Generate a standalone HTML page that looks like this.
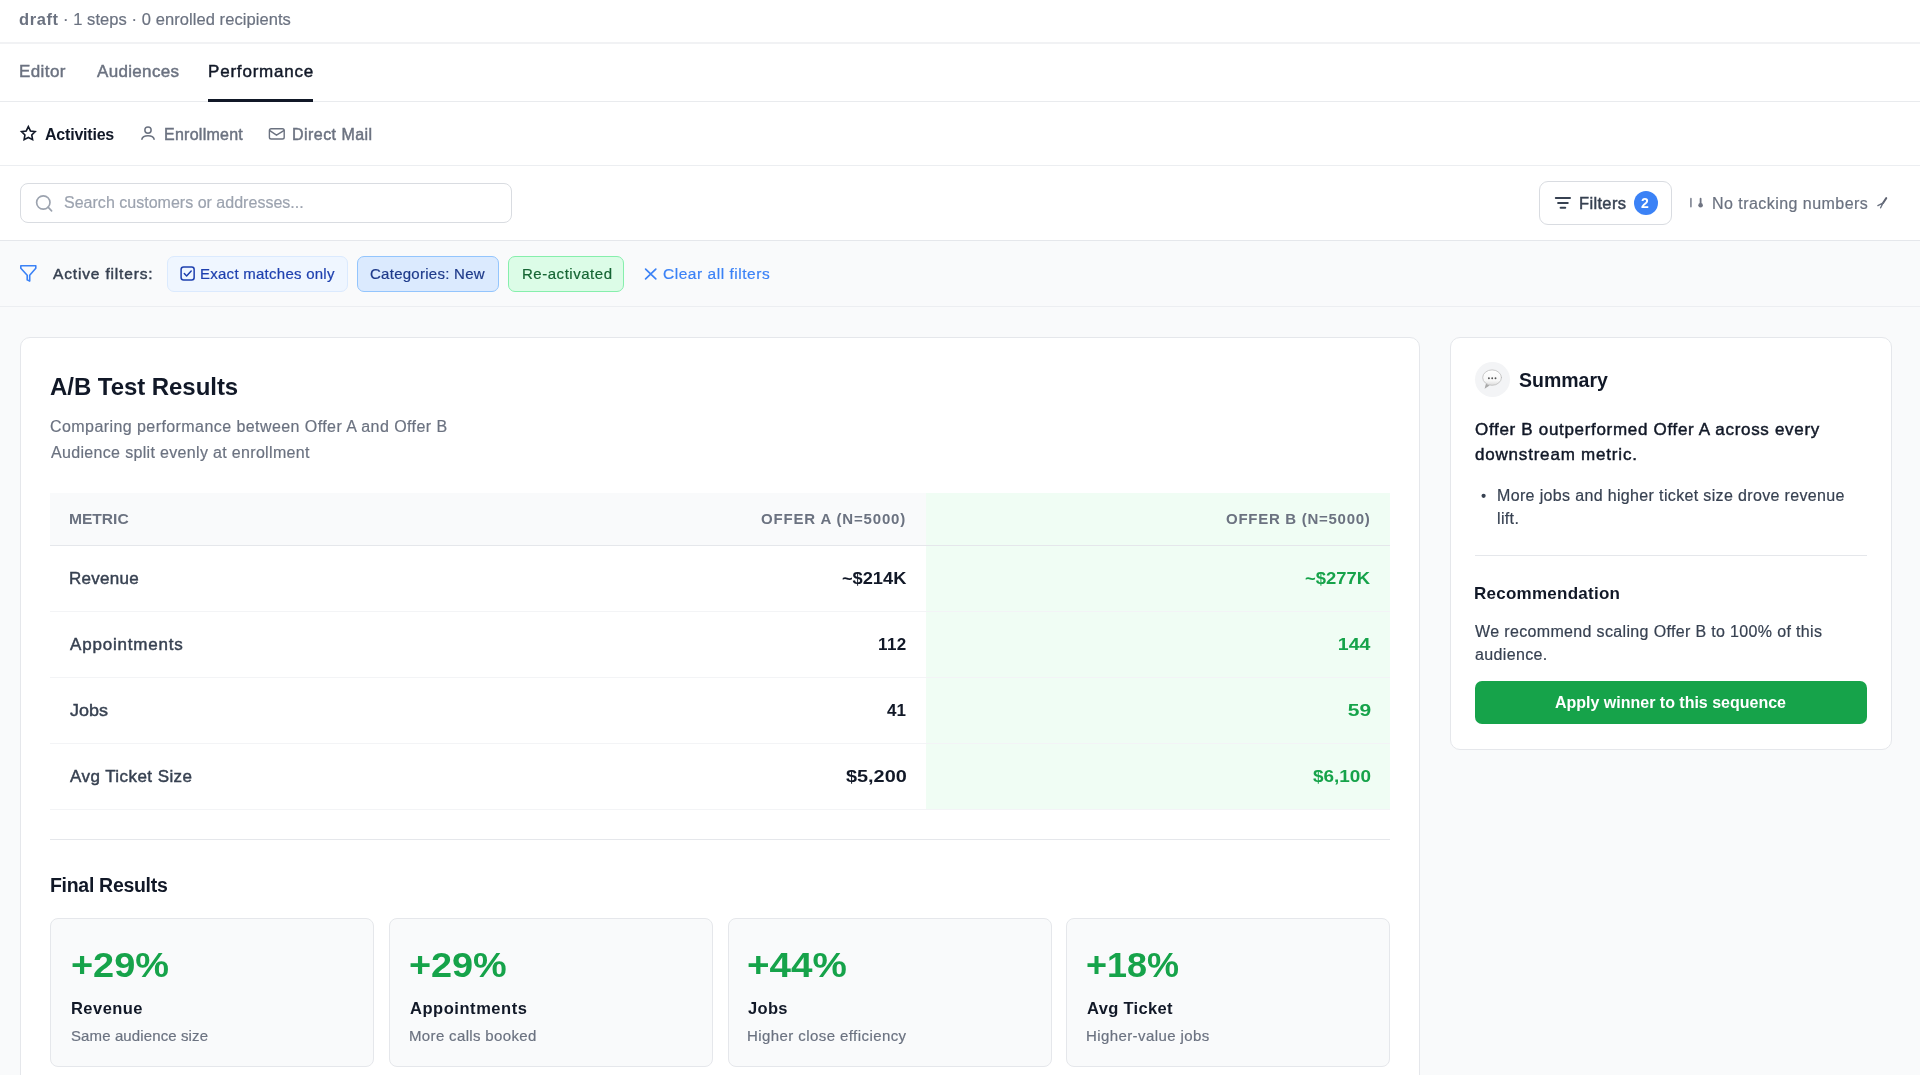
<!DOCTYPE html>
<html><head><meta charset="utf-8"><title>A/B Test Results</title>
<style>
html,body{margin:0;padding:0}
body{width:1920px;height:1075px;overflow:hidden;position:relative;background:#f9fafb;font-family:"Liberation Sans",sans-serif}
.a{position:absolute;box-sizing:border-box}
.t{position:absolute;white-space:nowrap;font-family:"Liberation Sans",sans-serif;will-change:transform}
</style></head><body>
<!-- header -->
<div class="a" style="left:0;top:0;width:1920px;height:241px;background:#fff"></div>
<div class="a" style="left:0;top:42px;width:1920px;height:2px;background:#f1f2f4"></div>
<div class="a" style="left:0;top:101px;width:1920px;height:1px;background:#e9ebee"></div>
<div class="a" style="left:208px;top:99px;width:105px;height:3px;background:#111827"></div>
<div class="a" style="left:0;top:165px;width:1920px;height:1px;background:#eceef1"></div>
<div class="a" style="left:20px;top:183px;width:492px;height:40px;border:1px solid #d9dce1;border-radius:8px;background:#fff"></div>
<div class="a" style="left:1539px;top:181px;width:133px;height:44px;border:1px solid #d9dce1;border-radius:9px;background:#fff"></div>
<div class="a" style="left:1633.5px;top:191px;width:24px;height:24px;border-radius:50%;background:#3b82f6"></div>
<div class="a" style="left:0;top:240px;width:1920px;height:1px;background:#e5e7eb"></div>
<!-- active filters bar -->
<div class="a" style="left:0;top:306px;width:1920px;height:1px;background:#eceef1"></div>
<div class="a" style="left:167px;top:256px;width:181px;height:36px;border:1px solid #dbeafe;border-radius:7px;background:#eff6ff"></div>
<div class="a" style="left:357px;top:256px;width:142px;height:36px;border:1px solid #93c5fd;border-radius:7px;background:#dbeafe"></div>
<div class="a" style="left:508px;top:256px;width:116px;height:36px;border:1px solid #86efac;border-radius:7px;background:#dcfce7"></div>
<!-- main card -->
<div class="a" style="left:20px;top:337px;width:1400px;height:800px;border:1px solid #e5e7eb;border-radius:10px;background:#fff"></div>
<div class="a" style="left:50px;top:493px;width:876px;height:52px;background:#f9fafb"></div>
<div class="a" style="left:926px;top:493px;width:464px;height:316px;background:#f0fdf4"></div>
<div class="a" style="left:50px;top:545px;width:1340px;height:1px;background:#e5e7eb"></div>
<div class="a" style="left:50px;top:611px;width:1340px;height:1px;background:#f3f4f6"></div>
<div class="a" style="left:50px;top:677px;width:1340px;height:1px;background:#f3f4f6"></div>
<div class="a" style="left:50px;top:743px;width:1340px;height:1px;background:#f3f4f6"></div>
<div class="a" style="left:50px;top:809px;width:1340px;height:1px;background:#f3f4f6"></div>
<div class="a" style="left:50px;top:839px;width:1340px;height:1px;background:#e5e7eb"></div>
<div class="a" style="left:50px;top:918px;width:324px;height:149px;border:1px solid #e5e7eb;border-radius:8px;background:#f9fafb"></div>
<div class="a" style="left:389px;top:918px;width:324px;height:149px;border:1px solid #e5e7eb;border-radius:8px;background:#f9fafb"></div>
<div class="a" style="left:727.5px;top:918px;width:324px;height:149px;border:1px solid #e5e7eb;border-radius:8px;background:#f9fafb"></div>
<div class="a" style="left:1066px;top:918px;width:324px;height:149px;border:1px solid #e5e7eb;border-radius:8px;background:#f9fafb"></div>
<!-- summary card -->
<div class="a" style="left:1450px;top:337px;width:442px;height:413px;border:1px solid #e5e7eb;border-radius:10px;background:#fff"></div>
<div class="a" style="left:1474.6px;top:361.9px;width:35px;height:35px;border-radius:50%;background:#f3f4f6"></div>
<div class="a" style="left:1475px;top:555px;width:392px;height:1px;background:#e5e7eb"></div>
<div class="a" style="left:1475px;top:681px;width:392px;height:43px;border-radius:7px;background:#16a34a"></div>
<svg class="a" style="left:0;top:0" width="1920" height="1075" viewBox="0 0 1920 1075" fill="none" stroke-linecap="round" stroke-linejoin="round">
<!-- star -->
<polygon points="28.35,126.64 30.47,130.93 35.20,131.62 31.77,134.95 32.58,139.66 28.35,137.44 24.12,139.66 24.93,134.95 21.50,131.62 26.23,130.93" stroke="#111827" stroke-width="1.6" stroke-linejoin="miter" stroke-miterlimit="10"/>
<!-- user -->
<circle cx="148" cy="130.05" r="3.15" stroke="#6b7280" stroke-width="1.5"/>
<path d="M141.85 139.25 C142.3 137 144.5 135.65 148 135.65 C151.5 135.65 153.7 137 154.15 139.25" stroke="#6b7280" stroke-width="1.5"/>
<!-- mail -->
<rect x="269.4" y="128.8" width="14.8" height="10.2" rx="1.8" stroke="#6b7280" stroke-width="1.4"/>
<path d="M269.8 130.6 L276.5 135.2 L283.8 130.6" stroke="#6b7280" stroke-width="1.4"/>
<!-- search -->
<circle cx="43.3" cy="202.5" r="6.68" stroke="#9ca3af" stroke-width="1.67"/>
<path d="M51.6 210.8 L48.05 207.2" stroke="#9ca3af" stroke-width="1.67"/>
<!-- filter lines -->
<path d="M1555.8 198 H1570 M1558.1 203 H1567.75 M1560.6 207.7 H1565.25" stroke="#374151" stroke-width="2"/>
<!-- tracking icons -->
<path d="M1690.9 198.7 V206.6" stroke="#8b909c" stroke-width="1.8"/>
<path d="M1700.6 198.7 V204" stroke="#6f7482" stroke-width="1.8"/>
<circle cx="1700.6" cy="205.3" r="2.3" fill="#6f7482"/>
<!-- pencil -->
<path d="M1886.2 198.2 L1883.2 202.8" stroke="#5f6472" stroke-width="2.1"/><path d="M1883.2 202.8 L1880.6 207.8 M1883.2 202.8 L1877.9 205.6" stroke="#6b7280" stroke-width="1.4"/>
<!-- funnel -->
<path d="M20.8 265.8 H35.8 V268.3 L29.7 275.2 V281.1 L27.2 279.9 V275.2 L20.8 268.3 Z" stroke="#3b82f6" stroke-width="1.6"/>
<!-- checkbox -->
<rect x="181.1" y="267.1" width="13.05" height="12.9" rx="2.5" stroke="#1e40af" stroke-width="1.5"/>
<path d="M184.3 273.5 L186.6 275.9 L191.2 271.1" stroke="#1e40af" stroke-width="1.5"/>
<!-- x -->
<path d="M645.6 269.2 L655.8 278.8 M655.8 269.2 L645.6 278.8" stroke="#3b82f6" stroke-width="1.7"/>
<!-- bullet -->
<circle cx="1483.6" cy="495.8" r="2.1" fill="#374151"/>
<!-- speech bubble emoji -->
<defs><linearGradient id="bg1" x1="0" y1="0" x2="0" y2="1"><stop offset="0" stop-color="#ffffff"/><stop offset="0.7" stop-color="#f7f7f7"/><stop offset="1" stop-color="#dcdcdc"/></linearGradient></defs>
<path d="M1486 383.6 L1484.6 388.8 L1489.6 385.4 Z" fill="#a9a9a9"/>
<ellipse cx="1492.1" cy="377.6" rx="9.4" ry="7.7" fill="url(#bg1)" stroke="#bdbdbd" stroke-width="0.8"/>
<circle cx="1488.9" cy="378.2" r="0.95" fill="#555"/>
<circle cx="1492.2" cy="378.2" r="0.95" fill="#555"/>
<circle cx="1495.5" cy="378.2" r="0.95" fill="#555"/>
</svg>

<div class="t" style="left:19px;top:9px;will-change:transform;font-size:16.5px;line-height:21px;white-space:nowrap;letter-spacing:0.575px;font-weight:700;color:#6b7280;">draft</div>
<div class="t" style="left:62.8px;top:9px;will-change:transform;font-size:16.5px;line-height:21px;white-space:nowrap;letter-spacing:0.069px;font-weight:400;-webkit-text-stroke:0.2px currentColor;color:#6b7280;">· 1 steps · 0 enrolled recipients</div>
<div class="t" style="left:19.3px;top:61px;will-change:transform;font-size:17.0px;line-height:21px;white-space:nowrap;letter-spacing:0.4px;font-weight:400;-webkit-text-stroke:0.45px currentColor;color:#6b7280;">Editor</div>
<div class="t" style="left:96.7px;top:61px;will-change:transform;font-size:17.0px;line-height:21px;white-space:nowrap;letter-spacing:0.325px;font-weight:400;-webkit-text-stroke:0.45px currentColor;color:#6b7280;">Audiences</div>
<div class="t" style="left:207.8px;top:61px;will-change:transform;font-size:17.0px;line-height:21px;white-space:nowrap;letter-spacing:0.8px;font-weight:400;-webkit-text-stroke:0.45px currentColor;color:#111827;">Performance</div>
<div class="t" style="left:44.9px;top:125px;will-change:transform;font-size:16.0px;line-height:20px;white-space:nowrap;letter-spacing:-0.211px;font-weight:700;color:#111827;">Activities</div>
<div class="t" style="left:163.5px;top:125px;will-change:transform;font-size:16.0px;line-height:20px;white-space:nowrap;letter-spacing:0.256px;font-weight:400;-webkit-text-stroke:0.45px currentColor;color:#6b7280;">Enrollment</div>
<div class="t" style="left:292.2px;top:125px;will-change:transform;font-size:16.0px;line-height:20px;white-space:nowrap;letter-spacing:0.45px;font-weight:400;-webkit-text-stroke:0.45px currentColor;color:#6b7280;">Direct Mail</div>
<div class="t" style="left:64.3px;top:193px;will-change:transform;font-size:16.0px;line-height:20px;white-space:nowrap;letter-spacing:0.016px;font-weight:400;-webkit-text-stroke:0.2px currentColor;color:#9ca3af;">Search customers or addresses...</div>
<div class="t" style="left:1578.75px;top:193px;will-change:transform;font-size:16.5px;line-height:21px;white-space:nowrap;letter-spacing:0.342px;font-weight:400;-webkit-text-stroke:0.45px currentColor;color:#374151;">Filters</div>
<div class="t" style="left:1641px;top:194px;will-change:transform;font-size:14.0px;line-height:18px;white-space:nowrap;letter-spacing:0px;font-weight:700;color:#ffffff;">2</div>
<div class="t" style="left:1711.75px;top:194px;will-change:transform;font-size:16px;line-height:20px;white-space:nowrap;letter-spacing:0.453px;font-weight:400;-webkit-text-stroke:0.2px currentColor;color:#6b7280;">No tracking numbers</div>
<div class="t" style="left:52.5px;top:264px;will-change:transform;font-size:15.5px;line-height:19px;white-space:nowrap;letter-spacing:0.839px;font-weight:400;-webkit-text-stroke:0.45px currentColor;color:#374151;">Active filters:</div>
<div class="t" style="left:199.6px;top:264px;will-change:transform;font-size:15.0px;line-height:19px;white-space:nowrap;letter-spacing:0.259px;font-weight:400;-webkit-text-stroke:0.2px currentColor;color:#1e40af;">Exact matches only</div>
<div class="t" style="left:370.25px;top:264px;will-change:transform;font-size:15.0px;line-height:19px;white-space:nowrap;letter-spacing:0.268px;font-weight:400;-webkit-text-stroke:0.2px currentColor;color:#1e3a8a;">Categories: New</div>
<div class="t" style="left:521.5px;top:264px;will-change:transform;font-size:15.0px;line-height:19px;white-space:nowrap;letter-spacing:0.527px;font-weight:400;-webkit-text-stroke:0.2px currentColor;color:#166534;">Re-activated</div>
<div class="t" style="left:662.7px;top:264px;will-change:transform;font-size:15.5px;line-height:19px;white-space:nowrap;letter-spacing:0.531px;font-weight:400;-webkit-text-stroke:0.2px currentColor;color:#3b82f6;">Clear all filters</div>
<div class="t" style="left:50px;top:372px;will-change:transform;font-size:24px;line-height:30px;white-space:nowrap;letter-spacing:-0.05px;font-weight:700;color:#111827;">A/B Test Results</div>
<div class="t" style="left:50px;top:417px;will-change:transform;font-size:16px;line-height:20px;white-space:nowrap;letter-spacing:0.429px;font-weight:400;-webkit-text-stroke:0.2px currentColor;color:#6b7280;">Comparing performance between Offer A and Offer B</div>
<div class="t" style="left:51px;top:443px;will-change:transform;font-size:16px;line-height:20px;white-space:nowrap;letter-spacing:0.329px;font-weight:400;-webkit-text-stroke:0.2px currentColor;color:#6b7280;">Audience split evenly at enrollment</div>
<div class="t" style="left:69.2px;top:510px;will-change:transform;font-size:14.5px;line-height:18px;white-space:nowrap;letter-spacing:0px;font-weight:700;color:#6b7280;transform:scaleX(1.0759);transform-origin:1px 0;">METRIC</div>
<div class="t" style="left:761.3px;top:509px;will-change:transform;font-size:15.0px;line-height:19px;white-space:nowrap;letter-spacing:0.827px;font-weight:700;color:#6b7280;">OFFER A (N=5000)</div>
<div class="t" style="left:1225.6px;top:509px;will-change:transform;font-size:15.0px;line-height:19px;white-space:nowrap;letter-spacing:0.72px;font-weight:700;color:#6b7280;">OFFER B (N=5000)</div>
<div class="t" style="left:69.3px;top:568px;will-change:transform;font-size:17.0px;line-height:21px;white-space:nowrap;letter-spacing:0.283px;font-weight:400;-webkit-text-stroke:0.45px currentColor;color:#374151;">Revenue</div>
<div class="t" style="left:841.7px;top:568px;will-change:transform;font-size:17.0px;line-height:21px;white-space:nowrap;letter-spacing:0px;font-weight:700;color:#111827;transform:scaleX(1.0729);transform-origin:1px 0;">~$214K</div>
<div class="t" style="left:1304.6px;top:568px;will-change:transform;font-size:17.0px;line-height:21px;white-space:nowrap;letter-spacing:0px;font-weight:700;color:#16a34a;transform:scaleX(1.0831);transform-origin:1px 0;">~$277K</div>
<div class="t" style="left:70.3px;top:634px;will-change:transform;font-size:17.0px;line-height:21px;white-space:nowrap;letter-spacing:0.809px;font-weight:400;-webkit-text-stroke:0.45px currentColor;color:#374151;">Appointments</div>
<div class="t" style="left:878.2px;top:634px;will-change:transform;font-size:17.0px;line-height:21px;white-space:nowrap;letter-spacing:0.4px;font-weight:700;color:#111827;">112</div>
<div class="t" style="left:1337.5px;top:634px;will-change:transform;font-size:17.0px;line-height:21px;white-space:nowrap;letter-spacing:0px;font-weight:700;color:#16a34a;transform:scaleX(1.1481);transform-origin:1px 0;">144</div>
<div class="t" style="left:70.3px;top:700px;will-change:transform;font-size:17.0px;line-height:21px;white-space:nowrap;letter-spacing:0px;font-weight:400;-webkit-text-stroke:0.45px currentColor;color:#374151;transform:scaleX(1.0556);transform-origin:0px 0;">Jobs</div>
<div class="t" style="left:886.9px;top:700px;will-change:transform;font-size:17.0px;line-height:21px;white-space:nowrap;letter-spacing:0.1px;font-weight:700;color:#111827;">41</div>
<div class="t" style="left:1347.5px;top:700px;will-change:transform;font-size:17.0px;line-height:21px;white-space:nowrap;letter-spacing:0px;font-weight:700;color:#16a34a;transform:scaleX(1.2353);transform-origin:1px 0;">59</div>
<div class="t" style="left:70.3px;top:766px;will-change:transform;font-size:17.0px;line-height:21px;white-space:nowrap;letter-spacing:0.436px;font-weight:400;-webkit-text-stroke:0.45px currentColor;color:#374151;">Avg Ticket Size</div>
<div class="t" style="left:846.4px;top:766px;will-change:transform;font-size:17.0px;line-height:21px;white-space:nowrap;letter-spacing:0px;font-weight:700;color:#111827;transform:scaleX(1.1686);transform-origin:0px 0;">$5,200</div>
<div class="t" style="left:1312.7px;top:766px;will-change:transform;font-size:17.0px;line-height:21px;white-space:nowrap;letter-spacing:0px;font-weight:700;color:#16a34a;transform:scaleX(1.1137);transform-origin:0px 0;">$6,100</div>
<div class="t" style="left:50px;top:873px;will-change:transform;font-size:19.5px;line-height:24px;white-space:nowrap;letter-spacing:-0.3px;font-weight:700;color:#111827;">Final Results</div>
<div class="t" style="left:70.5px;top:944px;will-change:transform;font-size:34.5px;line-height:43px;white-space:nowrap;letter-spacing:0px;font-weight:700;color:#16a34a;transform:scaleX(1.0989);transform-origin:1px 0;">+29%</div>
<div class="t" style="left:70.5px;top:998px;will-change:transform;font-size:16.5px;line-height:21px;white-space:nowrap;letter-spacing:0.458px;font-weight:700;color:#111827;">Revenue</div>
<div class="t" style="left:70.5px;top:1026px;will-change:transform;font-size:15.0px;line-height:19px;white-space:nowrap;letter-spacing:0.112px;font-weight:400;-webkit-text-stroke:0.2px currentColor;color:#6b7280;">Same audience size</div>
<div class="t" style="left:409px;top:944px;will-change:transform;font-size:34.5px;line-height:43px;white-space:nowrap;letter-spacing:0px;font-weight:700;color:#16a34a;transform:scaleX(1.0966);transform-origin:1px 0;">+29%</div>
<div class="t" style="left:410px;top:998px;will-change:transform;font-size:16.5px;line-height:21px;white-space:nowrap;letter-spacing:0.545px;font-weight:700;color:#111827;">Appointments</div>
<div class="t" style="left:409px;top:1026px;will-change:transform;font-size:15.0px;line-height:19px;white-space:nowrap;letter-spacing:0.35px;font-weight:400;-webkit-text-stroke:0.2px currentColor;color:#6b7280;">More calls booked</div>
<div class="t" style="left:747.3px;top:944px;will-change:transform;font-size:34.5px;line-height:43px;white-space:nowrap;letter-spacing:0px;font-weight:700;color:#16a34a;transform:scaleX(1.1195);transform-origin:1px 0;">+44%</div>
<div class="t" style="left:748.3px;top:998px;will-change:transform;font-size:16.5px;line-height:21px;white-space:nowrap;letter-spacing:0.333px;font-weight:700;color:#111827;">Jobs</div>
<div class="t" style="left:747.3px;top:1026px;will-change:transform;font-size:15.0px;line-height:19px;white-space:nowrap;letter-spacing:0.423px;font-weight:400;-webkit-text-stroke:0.2px currentColor;color:#6b7280;">Higher close efficiency</div>
<div class="t" style="left:1086.3px;top:944px;will-change:transform;font-size:34.5px;line-height:43px;white-space:nowrap;letter-spacing:0px;font-weight:700;color:#16a34a;transform:scaleX(1.0425);transform-origin:1px 0;">+18%</div>
<div class="t" style="left:1087.3px;top:998px;will-change:transform;font-size:16.5px;line-height:21px;white-space:nowrap;letter-spacing:0.333px;font-weight:700;color:#111827;">Avg Ticket</div>
<div class="t" style="left:1086.3px;top:1026px;will-change:transform;font-size:15.0px;line-height:19px;white-space:nowrap;letter-spacing:0.406px;font-weight:400;-webkit-text-stroke:0.2px currentColor;color:#6b7280;">Higher-value jobs</div>
<div class="t" style="left:1519px;top:368px;will-change:transform;font-size:19.5px;line-height:24px;white-space:nowrap;letter-spacing:0.0px;font-weight:700;color:#111827;">Summary</div>
<div class="t" style="left:1475px;top:419px;will-change:transform;font-size:17.0px;line-height:21px;white-space:nowrap;letter-spacing:0.685px;font-weight:400;-webkit-text-stroke:0.45px currentColor;color:#111827;">Offer B outperformed Offer A across every</div>
<div class="t" style="left:1475px;top:444px;will-change:transform;font-size:17.0px;line-height:21px;white-space:nowrap;letter-spacing:0.8px;font-weight:400;-webkit-text-stroke:0.45px currentColor;color:#111827;">downstream metric.</div>
<div class="t" style="left:1496.6px;top:486px;will-change:transform;font-size:16.0px;line-height:20px;white-space:nowrap;letter-spacing:0.349px;font-weight:400;-webkit-text-stroke:0.2px currentColor;color:#374151;">More jobs and higher ticket size drove revenue</div>
<div class="t" style="left:1496.6px;top:509px;will-change:transform;font-size:16.0px;line-height:20px;white-space:nowrap;letter-spacing:0.349px;font-weight:400;-webkit-text-stroke:0.2px currentColor;color:#374151;">lift.</div>
<div class="t" style="left:1474px;top:583px;will-change:transform;font-size:17.0px;line-height:21px;white-space:nowrap;letter-spacing:0.254px;font-weight:700;color:#111827;">Recommendation</div>
<div class="t" style="left:1475px;top:622px;will-change:transform;font-size:16.0px;line-height:20px;white-space:nowrap;letter-spacing:0.349px;font-weight:400;-webkit-text-stroke:0.2px currentColor;color:#374151;">We recommend scaling Offer B to 100% of this</div>
<div class="t" style="left:1475px;top:645px;will-change:transform;font-size:16.0px;line-height:20px;white-space:nowrap;letter-spacing:0.349px;font-weight:400;-webkit-text-stroke:0.2px currentColor;color:#374151;">audience.</div>
<div class="t" style="left:1555.2px;top:693px;will-change:transform;font-size:16.0px;line-height:20px;white-space:nowrap;letter-spacing:-0.007px;font-weight:700;color:#ffffff;">Apply winner to this sequence</div>
</body></html>
